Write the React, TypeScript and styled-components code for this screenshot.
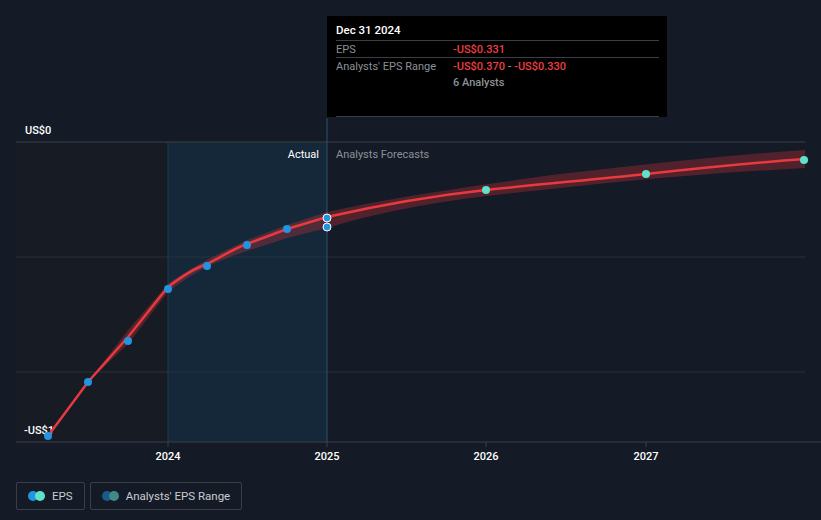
import React from "react";
import styled, { createGlobalStyle } from "styled-components";

const Global = createGlobalStyle`
  html, body { margin: 0; padding: 0; background: #151b26; }
  body { font-family: Roboto, "Liberation Sans", sans-serif; }
`;

const Page = styled.div`
  width: 821px; height: 520px; display: flex; flex-direction: column; background: #151b26; overflow: hidden;
`;
const ChartArea = styled.div`
  position: relative; width: 821px; height: 470px;
`;
const Tooltip = styled.div`
  position: absolute; left: 327px; top: 16px; width: 340px; height: 101px; background: #000;
  box-sizing: border-box; padding: 7px 8px 0 9px; font-size: 11px;
`;
const TipTitle = styled.div`
  color: #fff; font-weight: 500; font-size: 11.5px; padding-bottom: 3px; border-bottom: 1px solid #3a3f47;
`;
const TipRow = styled.div<{ $border?: boolean }>`
  display: grid; grid-template-columns: 117px 1fr; height: 16px; align-items: center;
  border-bottom: ${(p) => (p.$border ? "1px solid #3a3f47" : "none")};
`;
const Label = styled.span` color: #8d9096; `;
const Red = styled.span` color: #ef3e43; font-weight: 500; `;
const Grey = styled.span` color: #8d9096; font-weight: 500; `;
const Spacer = styled.div` height: 26px; border-bottom: 1px solid #3a3f47; `;
const Legend = styled.div`
  display: flex; gap: 5px; padding: 12px 0 0 16px;
`;
const LegendItem = styled.div`
  display: flex; align-items: center; gap: 7px; height: 26px; padding: 0 11px 0 11px;
  border: 1px solid #3a3f47; border-radius: 2px; color: #c9ccd1; font-size: 11.5px;
`;
const Dots = styled.span<{ $a: string; $b: string }>`
  position: relative; width: 17px; height: 10px; display: inline-block;
  &::before, &::after { content: ""; position: absolute; top: 0; width: 10px; height: 10px; border-radius: 50%; }
  &::before { left: 0; background: ${(p) => p.$a}; }
  &::after { left: 7px; background: ${(p) => p.$b}; }
`;

const actual: [number, number][] = [[48,436],[88,382],[128,341],[168,289],[207,266],[247,245],[287,229],[327,218]];
const forecast: [number, number][] = [[486,190],[646,174],[804,160]];

export default function App() {
  const line = "M48,436 L88,382 L128,337 L168,287 C185,274 195,268 207,264 C225,255 235,248 247,244 L287,229 L327,217 C380,205 430,196 486,190 C540,184 590,180 646,174 C700,168 750,163 805,159";
  const band = "M88,382 L128,330 L168,284 C190,268 210,258 247,240 L287,225 L327,212 C400,196 480,185 560,174 C650,164 730,155 805,150 L805,168 C730,172 650,178 560,188 C480,196 400,205 327,228 L287,238 L247,251 C210,263 190,275 168,292 L128,344 Z";
  return (
    <Page>
      <Global />
      <ChartArea>
        <svg width="821" height="470" style={{ display: "block" }}>
          <rect x="16" y="142" width="152" height="300" fill="#161b24" />
          <rect x="168" y="142" width="159" height="300" fill="#15283a" />
          <line x1="16" y1="142" x2="805" y2="142" stroke="#3a3f47" />
          <line x1="16" y1="257" x2="805" y2="257" stroke="#2a3039" />
          <line x1="16" y1="372" x2="805" y2="372" stroke="#2a3039" />
          <line x1="16" y1="442" x2="821" y2="442" stroke="#3a3f47" />
          <line x1="168" y1="142" x2="168" y2="442" stroke="#1f3a52" />
          <line x1="327" y1="118" x2="327" y2="442" stroke="#2a5070" />
          {[168, 327, 486, 646].map((x) => <line key={x} x1={x} y1="442" x2={x} y2="447" stroke="#3a3f47" />)}
          <text x="25" y="134" fill="#fff" fontSize="11" fontWeight="500">US$0</text>
          <text x="24" y="434" fill="#fff" fontSize="11" fontWeight="500">-US$1</text>
          <text x="319" y="158" fill="#fff" fontSize="11" textAnchor="end">Actual</text>
          <text x="336" y="158" fill="#8d9096" fontSize="11">Analysts Forecasts</text>
          {[["2024",168],["2025",327],["2026",486],["2027",646]].map(([t,x]) => (
            <text key={t as string} x={x as number} y="460" fill="#fff" fontSize="11" fontWeight="500" textAnchor="middle">{t}</text>
          ))}
          <path d={band} fill="#e0343b" fillOpacity="0.3" />
          <path d={line} fill="none" stroke="#e8393f" strokeWidth="2.5" />
          {actual.map(([x, y], i) => <circle key={i} cx={x} cy={y} r="4" fill="#2394df" />)}
          <circle cx="327" cy="218" r="4" fill="#2394df" stroke="#fff" strokeWidth="1" />
          <circle cx="327" cy="227" r="4" fill="#2394df" stroke="#fff" strokeWidth="1" />
          {forecast.map(([x, y], i) => <circle key={i} cx={x} cy={y} r="4" fill="#5ee3c8" />)}
        </svg>
        <Tooltip>
          <TipTitle>Dec 31 2024</TipTitle>
          <TipRow $border><Label>EPS</Label><Red>-US$0.331</Red></TipRow>
          <TipRow><Label>Analysts' EPS Range</Label><span><Red>-US$0.370</Red><Grey> - </Grey><Red>-US$0.330</Red></span></TipRow>
          <TipRow><span /><Grey>6 Analysts</Grey></TipRow>
          <Spacer />
        </Tooltip>
      </ChartArea>
      <Legend>
        <LegendItem><Dots $a="#2394df" $b="#5ee3c8" />EPS</LegendItem>
        <LegendItem><Dots $a="#1c5a8a" $b="#3f8a88" />Analysts' EPS Range</LegendItem>
      </Legend>
    </Page>
  );
}
